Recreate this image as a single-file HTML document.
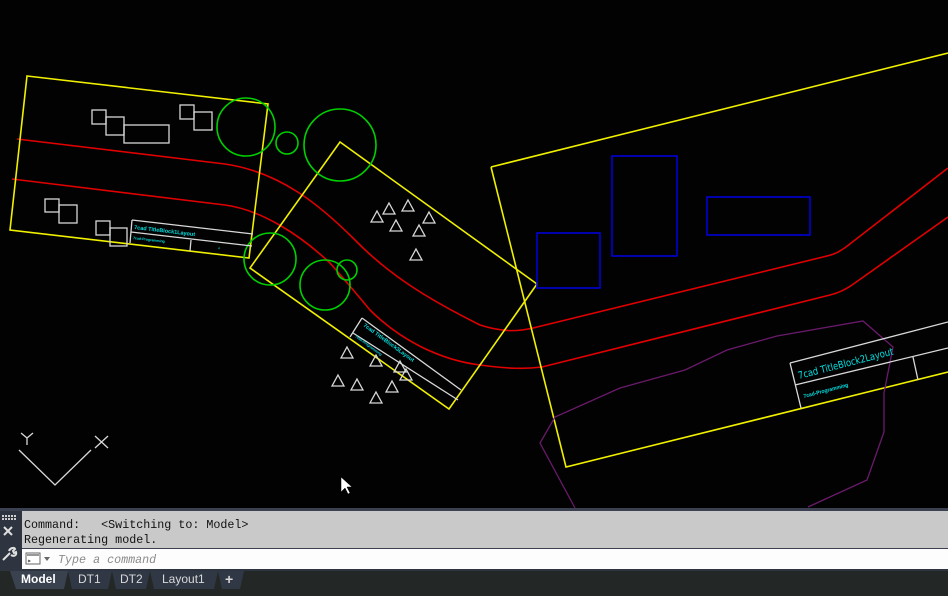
<!DOCTYPE html>
<html><head><meta charset="utf-8"><style>
html,body{margin:0;padding:0;background:#000;width:948px;height:596px;overflow:hidden;font-family:"Liberation Sans",sans-serif}
#c{position:absolute;left:0;top:0}
</style></head><body>
<svg id="c" width="948" height="596" viewBox="0 0 948 596">
<rect width="948" height="508" fill="#020203"/>
<g fill="none" stroke-width="1.6">
<path d="M17,139 L225,164 C280,172 320,205 355,240 C390,276 430,300 480,325 C505,333 520,331 533,328 L827,256 C836,254 840,251 846,247 L948,168" stroke="#e00000"/>
<path d="M12,179 L225,205 C262,210 300,235 330,263 C345,280 355,292 370,310 C400,340 440,360 480,365 C510,369 525,369 542,367 L830,295 C838,293 845,290 852,285 L948,217" stroke="#e00000"/>
<path d="M27,76 L268,104 L249,258 L10,230 Z" stroke="#f0f000"/>
<path d="M340,142 L537,284 L449,409 L250,268 Z" stroke="#f0f000"/>
<path d="M491,167 L948,53 M491,167 L566,467 L948,372" stroke="#f0f000"/>
<g stroke="#00d000">
<circle cx="246" cy="127" r="29"/><circle cx="287" cy="143" r="11"/><circle cx="340" cy="145" r="36"/>
<circle cx="270" cy="259" r="26"/><circle cx="325" cy="285" r="25"/><circle cx="347" cy="270" r="10"/>
</g>
<g stroke="#0000d8"><rect x="612" y="156" width="65" height="100"/><rect x="537" y="233" width="63" height="55"/><rect x="707" y="197" width="103" height="38"/></g>
<path d="M575,508 L540,443 L555,417 L620,388 L685,370 L727,350 L777,336 L863,321 L893,347 L884,393 L884,432 L867,480 L808,507" stroke="#6a1a6a" stroke-width="1.3"/>
</g>
<g fill="none" stroke="#d8d8d8" stroke-width="1.3">
<rect x="92" y="110" width="14" height="14"/><rect x="106" y="117" width="18" height="18"/><rect x="124" y="125" width="45" height="18"/>
<rect x="180" y="105" width="14" height="14"/><rect x="194" y="112" width="18" height="18"/>
<rect x="45" y="199" width="14" height="13"/><rect x="59" y="205" width="18" height="18"/>
<rect x="96" y="221" width="14" height="14"/><rect x="110" y="228" width="17" height="18"/>
<path d="M132,220 L253,234 M131,232 L252,246 M132,220 L130,243 M191,240 L190,251"/>
<path d="M362,318 L461,390 M353,333 L458,400 M362,318 L350,337"/>
<path d="M790,363 L948,322 M795,385 L948,348 M790,363 L801,408 M913,357 L918,380"/>
<path d="M377,211 L383,222 L371,222 Z M389,203 L395,214 L383,214 Z M408,200 L414,211 L402,211 Z M396,220 L402,231 L390,231 Z M429,212 L435,223 L423,223 Z M419,225 L425,236 L413,236 Z M416,249 L422,260 L410,260 Z"/>
<path d="M347,347 L353,358 L341,358 Z M376,355 L382,366 L370,366 Z M400,361 L406,372 L394,372 Z M406,369 L412,380 L400,380 Z M338,375 L344,386 L332,386 Z M357,379 L363,390 L351,390 Z M392,381 L398,392 L386,392 Z M376,392 L382,403 L370,403 Z"/>
<path d="M19,450 L55,485 L91,450 M21,433 L27,438 L33,433 M27,438 L27,445 M95,436 L108,448 M108,436 L95,448"/>
</g>
<g fill="#00e0e0" font-family="Liberation Sans, sans-serif">
<text transform="translate(134,229) rotate(6.6)" font-size="5.5" font-weight="bold">7cad TitleBlock1Layout</text>
<text transform="translate(133,239) rotate(6.6)" font-size="3.5" font-weight="bold">7cad-Programming</text>
<text transform="translate(218,249) rotate(6.6)" font-size="3">A</text>
<text transform="translate(363,326) rotate(36)" font-size="5.5" font-weight="bold">7cad TitleBlock3Layout</text>
<text transform="translate(355,337) rotate(36)" font-size="3.5" font-weight="bold">7cad-Programming</text>
<text transform="translate(799,379) rotate(-14.5)" font-size="10" font-family="DejaVu Sans Condensed, DejaVu Sans, sans-serif" textLength="98" lengthAdjust="spacingAndGlyphs">7cad TitleBlock2Layout</text>
<text transform="translate(804,398) rotate(-14.5)" font-size="5.5" font-weight="bold" textLength="46" lengthAdjust="spacingAndGlyphs">7cad-Programming</text>
</g>
<path d="M341,477 L341,492 L345,488 L348,494 L350,493 L347,487 L352,487 Z" fill="#fff" stroke="#000" stroke-width="0.5"/>
<rect x="0" y="508" width="948" height="3" fill="#3b4150"/>
<rect x="0" y="511" width="948" height="37" fill="#c9c9c9"/>
<rect x="0" y="548" width="948" height="1" fill="#3b4150"/>
<rect x="0" y="549" width="948" height="20" fill="#fdfdfd"/>
<rect x="0" y="569" width="948" height="27" fill="#232826"/>
<rect x="0" y="569" width="948" height="2" fill="#2e3440"/>
<rect x="0" y="511" width="22" height="58" fill="#2e3440"/>
<g fill="#d0d0d0"><rect x="2" y="515" width="2" height="2"/><rect x="5" y="515" width="2" height="2"/><rect x="8" y="515" width="2" height="2"/><rect x="11" y="515" width="2" height="2"/><rect x="14" y="515" width="2" height="2"/><rect x="2" y="518" width="2" height="2"/><rect x="5" y="518" width="2" height="2"/><rect x="8" y="518" width="2" height="2"/><rect x="11" y="518" width="2" height="2"/><rect x="14" y="518" width="2" height="2"/></g>
<path d="M4,527 L12,535 M12,527 L4,535" stroke="#e0e0e0" stroke-width="2"/>
<path d="M3,560 L10,553 M9,551 C10,548 14,547 15,549 L13,551 L14,553 L16,552 C17,555 14,557 11,555" stroke="#e0e0e0" stroke-width="2" fill="none"/>
<rect x="26" y="553" width="14" height="11" fill="#fff" stroke="#666"/><rect x="27" y="554" width="12" height="2" fill="#999"/>
<path d="M28,560 L30,561 L28,562" stroke="#333" fill="none" stroke-width="0.8"/>
<path d="M44,557 L50,557 L47,561 Z" fill="#666"/>
<text x="24" y="528" font-family="Liberation Mono, monospace" font-size="11.7" fill="#111">Command:&#160;&#160;&#160;&lt;Switching to: Model&gt;</text>
<text x="24" y="543" font-family="Liberation Mono, monospace" font-size="11.7" fill="#111">Regenerating model.</text>
<text x="58" y="563" font-family="Liberation Mono, monospace" font-size="11.7" font-style="italic" fill="#8a8a8a">Type a command</text>
<g fill="#313845">
<path d="M10,571 L68,571 L64,589 L16,589 Z" fill="#3a4250"/>
<path d="M68,571 L112,571 L108,589 L72,589 Z"/>
<path d="M112,571 L150,571 L146,589 L116,589 Z"/>
<path d="M150,571 L218,571 L214,589 L154,589 Z"/>
<path d="M218,571 L244,571 L240,589 L222,589 Z"/>
</g>
<g font-family="Liberation Sans, sans-serif" font-size="12" fill="#d8d8d8">
<text x="21" y="583" font-weight="bold" fill="#fff">Model</text>
<text x="78" y="583">DT1</text>
<text x="120" y="583">DT2</text>
<text x="162" y="583">Layout1</text>
<text x="225" y="584" font-weight="bold" font-size="14">+</text>
</g>
</svg>
</body></html>
